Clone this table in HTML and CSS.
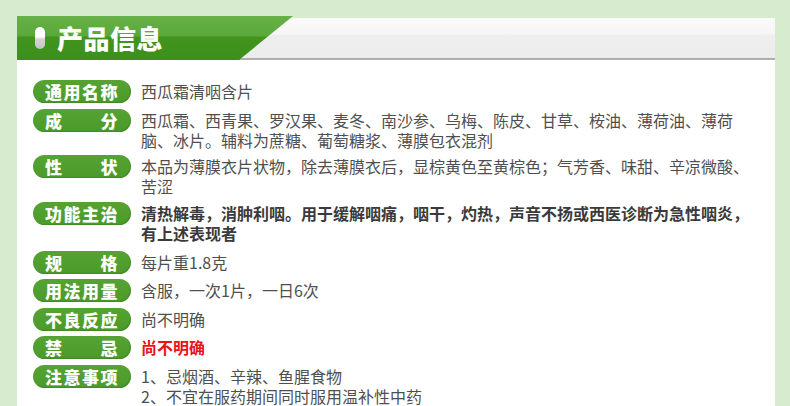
FILE: index.html
```html
<!DOCTYPE html>
<html lang="zh-CN">
<head>
    <meta charset="UTF-8">
    <meta name="viewport" content="width=device-width, initial-scale=1.0">
    <title>产品信息</title>
    <link rel="stylesheet" href="styles.css">
</head>
<body>

    <div class="wrap">
        <div class="header">
            <div class="tab">
                <span class="pill"></span>
                <h2>产品信息</h2>
            </div>
        </div>

        <div class="panel">
            <div class="row">
                <span class="label">通用名称</span>
                <p class="text">西瓜霜清咽含片</p>
            </div>
            <div class="row">
                <span class="label">成　　分</span>
                <p class="text">西瓜霜、西青果、罗汉果、麦冬、南沙参、乌梅、陈皮、甘草、桉油、薄荷油、薄荷脑、冰片。辅料为蔗糖、葡萄糖浆、薄膜包衣混剂</p>
            </div>
            <div class="row">
                <span class="label">性　　状</span>
                <p class="text">本品为薄膜衣片状物，除去薄膜衣后，显棕黄色至黄棕色；气芳香、味甜、辛凉微酸、苦涩</p>
            </div>
            <div class="row row-wide">
                <span class="label">功能主治</span>
                <p class="text strong">清热解毒，消肿利咽。用于缓解咽痛，咽干，灼热，声音不扬或西医诊断为急性咽炎，有上述表现者</p>
            </div>
            <div class="row">
                <span class="label">规　　格</span>
                <p class="text">每片重1.8克</p>
            </div>
            <div class="row">
                <span class="label">用法用量</span>
                <p class="text">含服，一次1片，一日6次</p>
            </div>
            <div class="row">
                <span class="label">不良反应</span>
                <p class="text">尚不明确</p>
            </div>
            <div class="row">
                <span class="label">禁　　忌</span>
                <p class="text strong red">尚不明确</p>
            </div>
            <div class="row">
                <span class="label">注意事项</span>
                <p class="text">1、忌烟酒、辛辣、鱼腥食物<br>2、不宜在服药期间同时服用温补性中药<br>3、孕妇慎用</p>
            </div>
        </div>
    </div>

</body>
</html>
```

FILE: styles.css
```css
body {
    margin: 0;
    background-color: #d7ebcf;
    font-family: "Noto Sans CJK SC", "Noto Sans", sans-serif;
    overflow: hidden;
}

.wrap {
    width: 758px;
    margin-left: 17px;
    padding-top: 16px;
}

.header {
    height: 44px;
    background: linear-gradient(#d7ebcf 0, #d7ebcf 2px, #fafafa 2px, #f6f6f6 18px, #eeeeee 19px, #ececec 42px, #a9a9a9 42px, #b5b5b5 44px);
}

.tab {
    display: flex;
    align-items: center;
    width: 276px;
    height: 44px;
    background: linear-gradient(#68b048, #5aa83a 20px, #41951f 21px, #3b8f1a);
    clip-path: polygon(0 0, 276px 0, 222px 100%, 0 100%);
}

.pill {
    width: 10px;
    height: 22px;
    margin-left: 18px;
    border-radius: 5px;
    background: linear-gradient(#ffffff, #ffffff 45%, #d4d4d4 55%, #c4c4c4);
}

.tab h2 {
    margin: 0 0 0 12px;
    color: white;
    font-size: 26px;
    font-weight: 900;
    line-height: 44px;
    letter-spacing: 0.5px;
}

.panel {
    background: white;
    padding: 20px 0 40px 16px;
}

.row {
    display: flex;
    align-items: flex-start;
    margin-bottom: 5.5px;
}

.row-wide {
    margin-bottom: 8px;
}

.label {
    flex: none;
    width: 98px;
    height: 23px;
    border-radius: 12px;
    background: linear-gradient(#55a333, #4b9a2a);
    color: white;
    font-size: 17px;
    font-weight: 900;
    line-height: 23px;
    letter-spacing: 1.5px;
    text-align: center;
    box-shadow: inset -1px -1px 1px rgba(0, 0, 0, 0.12);
}

.text {
    width: 615px;
    margin: 0 0 0 10px;
    padding-top: 1px;
    color: #4f4f4f;
    font-size: 16px;
    line-height: 20px;
}

.strong {
    color: #3a3a3a;
    font-weight: bold;
}

.red {
    color: #e8141a;
}
```
